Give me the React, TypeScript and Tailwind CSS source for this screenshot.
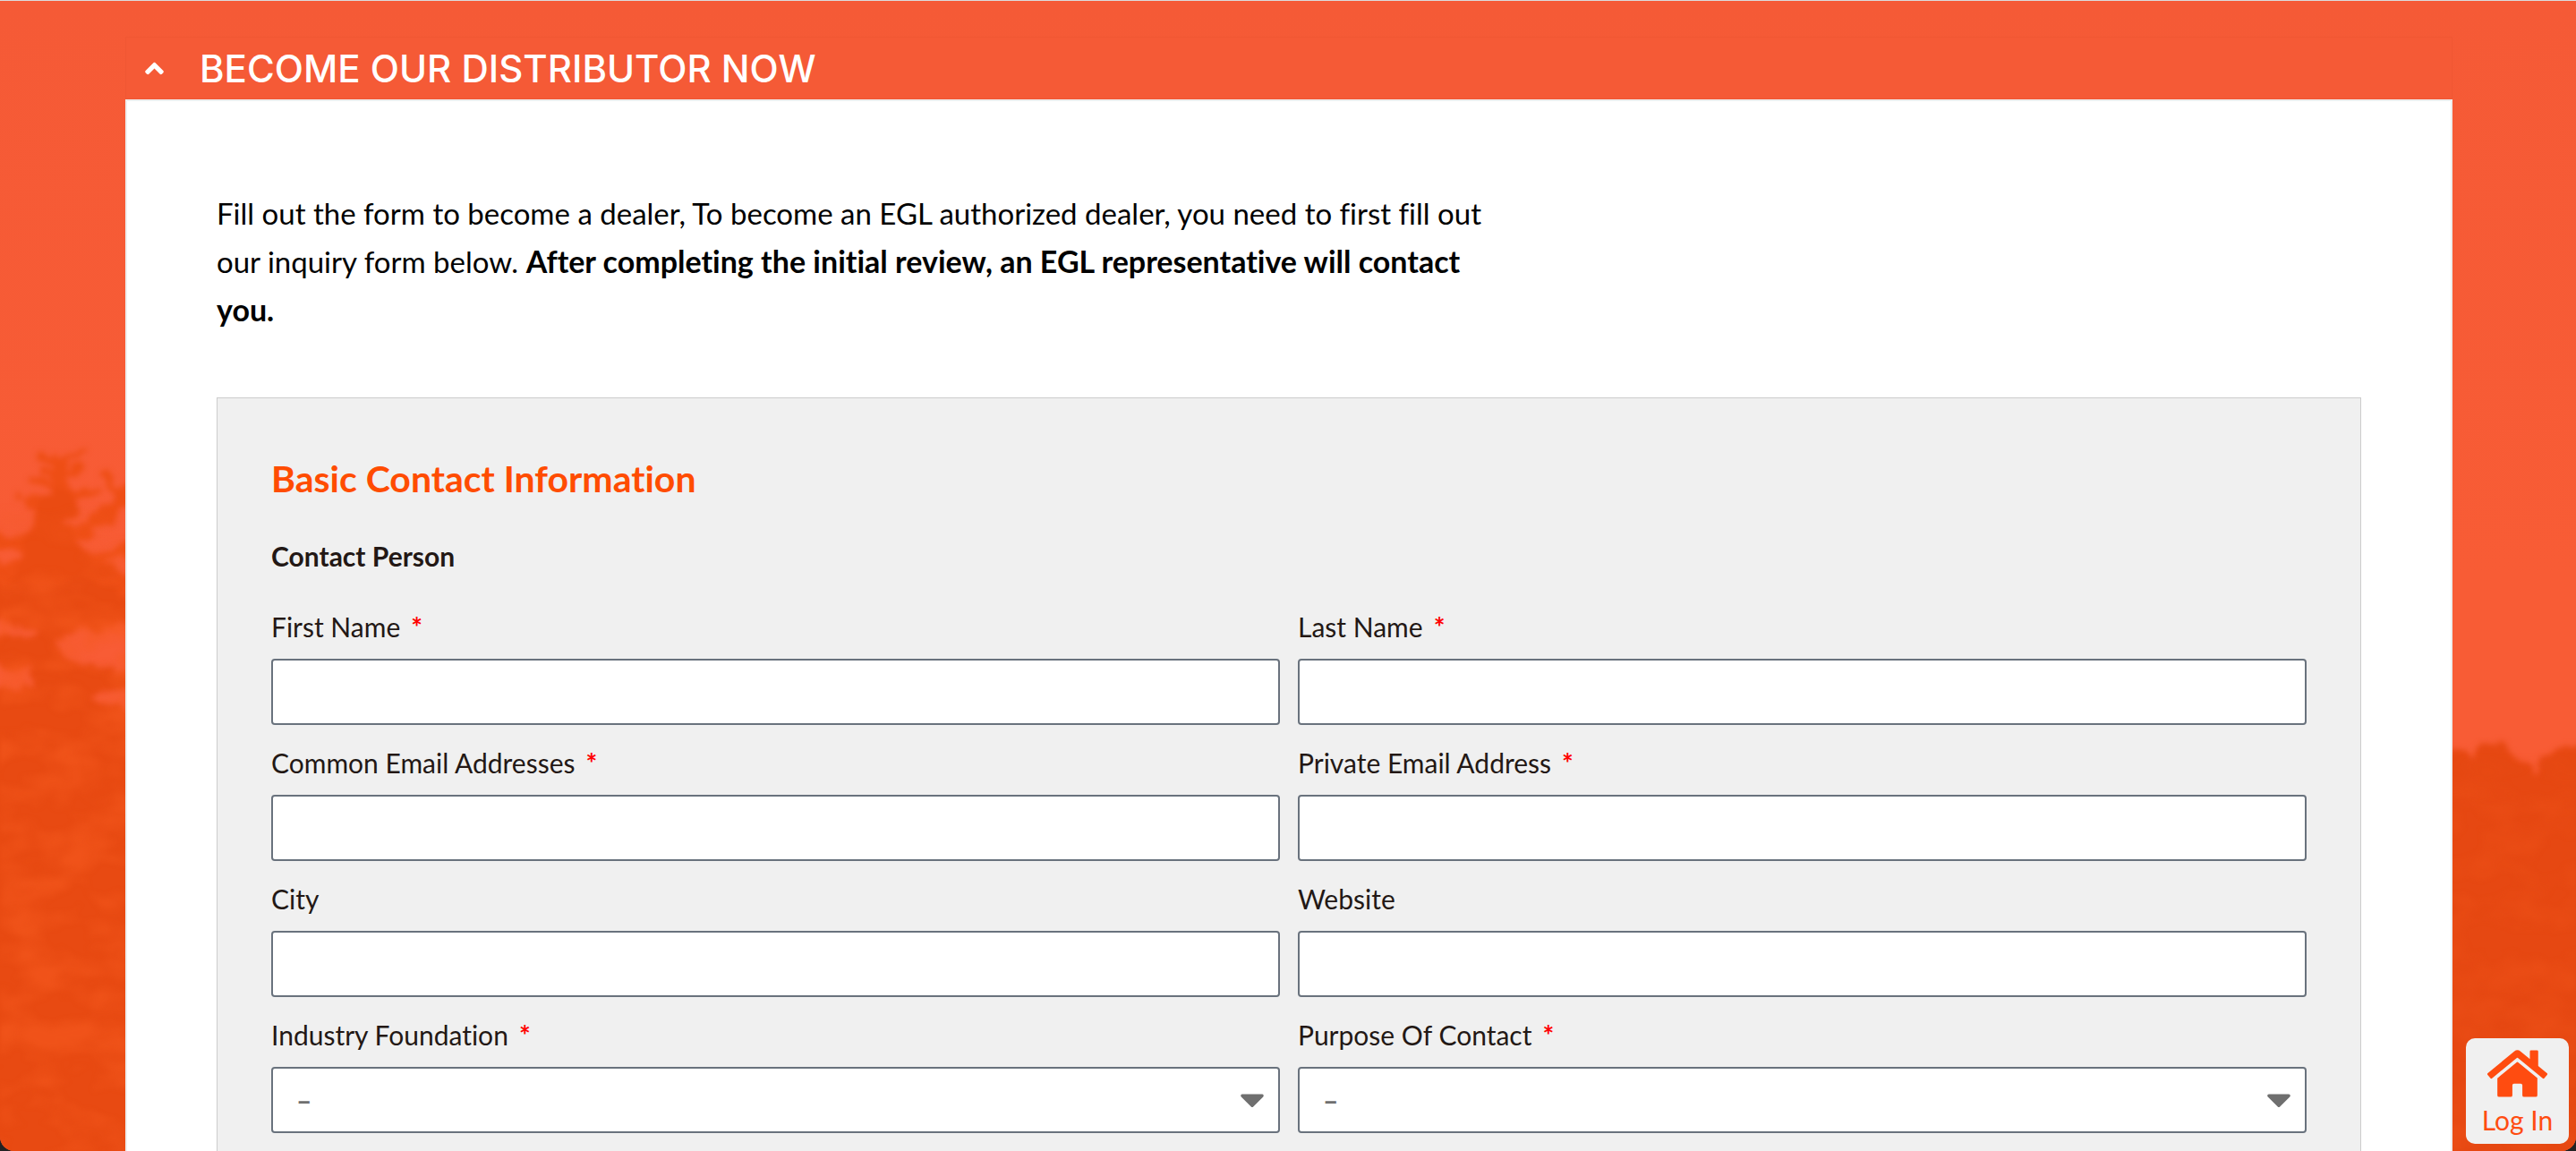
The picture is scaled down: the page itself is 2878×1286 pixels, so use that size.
import { FaAngleUp, FaCaretDown, FaHome } from 'react-icons/fa';

interface FieldProps {
  id: string;
  label: string;
  type?: 'text' | 'email' | 'url' | 'select';
  required?: boolean;
}

const fields: FieldProps[] = [
  { id: 'first-name', label: 'First Name', required: true },
  { id: 'last-name', label: 'Last Name', required: true },
  { id: 'common-email', label: 'Common Email Addresses', type: 'email', required: true },
  { id: 'private-email', label: 'Private Email Address', type: 'email', required: true },
  { id: 'city', label: 'City' },
  { id: 'website', label: 'Website', type: 'url' },
  { id: 'industry', label: 'Industry Foundation', type: 'select', required: true },
  { id: 'purpose', label: 'Purpose Of Contact', type: 'select', required: true },
];

const controlClass =
  'block h-[74px] w-full rounded-[4px] border-2 border-[#69727d] bg-white px-[26px] text-[30px] text-[#6f6f6f] outline-none';

const Field = ({ id, label, type = 'text', required = false }: FieldProps) => (
  <div>
    <label htmlFor={id} className="block pb-[18px] text-[30px] leading-9 text-[#231815]">
      {label}
      {required && <span className="ml-3 font-bold text-[#ff0000]">*</span>}
    </label>
    {type === 'select' ? (
      <div className="relative">
        <select id={id} required={required} className={`${controlClass} appearance-none font-bold`}>
          <option>–</option>
        </select>
        <FaCaretDown className="pointer-events-none absolute top-3.5 right-[9px] size-11 text-[#6f6f6f]" />
      </div>
    ) : (
      <input id={id} type={type} required={required} className={controlClass} />
    )}
  </div>
);

// Soft tree line behind the panel, tinted by the orange overlay
const Backdrop = () => (
  <svg
    aria-hidden="true"
    className="absolute inset-0 h-full w-full"
    viewBox="0 0 2878 1286"
    preserveAspectRatio="none"
  >
    <defs>
      <linearGradient id="sky" x1="0" y1="0" x2="0" y2="1">
        <stop offset="0" stopColor="#f55a36" />
        <stop offset="0.5" stopColor="#f85c35" />
        <stop offset="1" stopColor="#f85c35" />
      </linearGradient>
      <linearGradient id="fade" x1="0" y1="0" x2="0" y2="1">
        <stop offset="0" stopColor="#000000" />
        <stop offset="0.15" stopColor="#ffffff" />
        <stop offset="1" stopColor="#ffffff" />
      </linearGradient>
      <mask id="left-fade">
        <rect y="560" width="180" height="726" fill="url(#fade)" />
      </mask>
      <mask id="right-fade">
        <rect x="2700" y="840" width="178" height="446" fill="url(#fade)" />
      </mask>
      <filter id="leaves" x="-10%" y="-10%" width="120%" height="120%" colorInterpolationFilters="sRGB">
        <feTurbulence type="fractalNoise" baseFrequency="0.05" numOctaves="2" seed="7" result="noise" />
        <feDisplacementMap in="SourceGraphic" in2="noise" scale="26" xChannelSelector="R" yChannelSelector="G" />
        <feGaussianBlur stdDeviation="3" />
      </filter>
      <filter id="mottle" x="0" y="0" width="100%" height="100%" colorInterpolationFilters="sRGB">
        <feTurbulence type="fractalNoise" baseFrequency="0.016 0.028" numOctaves="3" seed="12" />
        <feColorMatrix values="0 0 0 0 0.96  0 0 0 0 0.35  0 0 0 0 0.12  3 0 0 0 -1.2" />
        <feGaussianBlur stdDeviation="2" />
      </filter>
    </defs>
    <rect width="2878" height="1286" fill="url(#sky)" />
    <g filter="url(#leaves)">
      <g fill="none" stroke="#ee4e15" strokeLinecap="round">
        <path strokeWidth="9" d="M46 510 66 518 92 504M52 530 88 524M24 558 50 566M40 536 60 552 104 547M118 534 134 548 180 530" />
        <path strokeWidth="16" d="M180 548 138 560 104 582M-20 602 40 606M180 606 130 618 96 626M40 590 100 596" />
        <path strokeWidth="20" d="M70 522 64 560 48 600 56 640M-20 636 60 632 110 636M-20 650 100 650 180 652" />
      </g>
      <path
        fill="#ea4b12"
        d="M60 540 84 556 78 584 90 612 112 628 132 640 60 664 10 660 24 620 36 580Z"
      />
      <path
        fill="#e84a12"
        d="M-40 650 50 655 100 648 180 676V694L110 700 60 716 80 738 180 750V772L100 776 180 812V1330H-40V760L30 768 40 748-40 738V716L50 704-40 690Z"
      />
      <path fill="#e64812" d="M2700 842 2750 836 2762 852 2778 832 2800 828 2812 850 2834 858 2856 834 2930 828V1330H2700Z" />
    </g>
    <g mask="url(#left-fade)">
      <rect y="560" width="180" height="726" filter="url(#mottle)" opacity="0.6" />
    </g>
    <g mask="url(#right-fade)">
      <rect x="2700" y="840" width="178" height="446" filter="url(#mottle)" opacity="0.3" />
    </g>
  </svg>
);

const App = () => {
  return (
    <div className="bg-[#222222] font-[Lato,'Noto_Sans',sans-serif] [font-variant-ligatures:none]">
      <main className="relative h-screen overflow-hidden rounded-b-[16px] border-t border-[#dcdcdc] pt-10 pr-[138px] pl-[140px]">
        <Backdrop />

        <section className="relative">
          <h2>
            <button
              type="button"
              aria-expanded="true"
              className="flex h-[70px] w-full items-center gap-[34px] border border-[#f05733] bg-[#f55a36] px-[15px] text-left font-[Inter,sans-serif] text-[42px] font-medium text-white"
            >
              <FaAngleUp className="size-[33px]" />
              BECOME OUR DISTRIBUTOR NOW
            </button>
          </h2>

          <div className="border-2 border-[#eeeeee] bg-white px-[100px] pt-[98px] pb-[100px]">
            <p className="max-w-[1440px] text-[33px] leading-[54px] text-black">
              Fill out the form to become a dealer, To become an EGL authorized dealer, you need to first fill out our
              inquiry form below.{' '}
              <strong className="text-[34px]">
                After completing the initial review, an EGL representative will contact
                <br />
                you.
              </strong>
            </p>

            <form className="mt-[71px] border border-[#cccccc] bg-[#f0f0f0] px-[60px] pt-[60px] pb-20">
              <h3 className="text-[41px] leading-[60px] font-bold text-[#ff4c00]">Basic Contact Information</h3>
              <h4 className="mt-[38px] text-[30px] leading-9 font-bold text-[#231815]">Contact Person</h4>
              <div className="mt-[43px] grid grid-cols-2 gap-x-5 gap-y-6">
                {fields.map((field) => (
                  <Field key={field.id} {...field} />
                ))}
              </div>
            </form>
          </div>
        </section>

        <a
          href="#login"
          className="absolute right-2 bottom-2 flex h-[118px] w-[115px] flex-col items-center rounded-[10px] bg-[#f0f0f0] pt-1.5 text-[30px] leading-9 text-[#ff4c10]"
        >
          <FaHome className="size-[67px]" />
          Log In
        </a>
      </main>
    </div>
  );
};

export default App;
